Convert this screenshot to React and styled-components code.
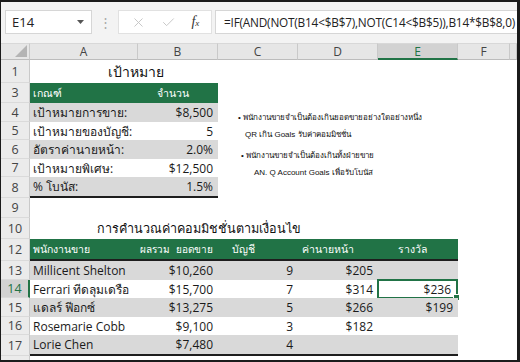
import React from 'react'
import styled, { createGlobalStyle } from 'styled-components'
import { X, Check } from 'lucide-react'

const GREEN = '#217346'
const STRIPE = '#d9d9d9'
const FONT = '"Segoe UI", "Open Sans", "Noto Sans", sans-serif'

const Global = createGlobalStyle`
  html, body { margin: 0; padding: 0; background: #fff; }
  body { font-family: ${FONT}; }
`

const Frame = styled.div`
  width: 520px;
  height: 362px;
  box-sizing: border-box;
  border-style: solid;
  border-color: #1b1b1b;
  border-width: 2px 3px 2px 1px;
  display: flex;
  flex-direction: column;
  overflow: hidden;
  background: #fff;
`

const FormulaBar = styled.div`
  height: 41px;
  flex: none;
  background: #f3f3f3;
  display: flex;
  align-items: flex-start;
  padding: 8px 0 0 4px;
  box-sizing: border-box;
`

const NameBox = styled.div`
  width: 87px;
  height: 24px;
  box-sizing: border-box;
  background: #fff;
  border: 1px solid #d6d6d6;
  display: flex;
  align-items: center;
  justify-content: space-between;
  padding: 0 7px 0 6px;
  font-size: 13px;
  color: #222;
`

const Grip = styled.div`
  width: 26px;
  display: flex;
  justify-content: center;
  color: #a8a8a8;
  font-size: 13px;
  line-height: 24px;
`

const ButtonBox = styled.div`
  width: 94px;
  height: 24px;
  box-sizing: border-box;
  background: #fff;
  border: 1px solid #e1e1e1;
  display: flex;
  align-items: center;
  justify-content: space-around;
  padding: 0 4px;
  color: #c4c4c4;
`

const Fx = styled.span`
  font-family: "Liberation Serif", serif;
  font-style: italic;
  font-size: 14px;
  color: #333;
  sub {
    font-size: 9px;
    vertical-align: baseline;
  }
`

const FormulaInput = styled.div`
  flex: 1;
  margin-left: 3px;
  height: 24px;
  box-sizing: border-box;
  background: #fff;
  border: 1px solid #d6d6d6;
  border-right: none;
  padding-left: 8px;
  display: flex;
  align-items: center;
  font-size: 11.8px;
  letter-spacing: -0.2px;
  color: #222;
  white-space: nowrap;
  overflow: hidden;
`

const Sheet = styled.div`
  flex: 1;
  display: grid;
  grid-template-columns: 29px 108px 80px 80px 80px 80px 52px 1fr;
  grid-template-rows: 17px 23px 20px 19px 18px 19px 18px 21px 20px 21px 22px 19px 18px 19px 18px 21px 1fr;
  min-height: 0;
`

const Corner = styled.div`
  background: #e6e6e6;
  border-right: 1px solid #c9c9c9;
  border-bottom: 1px solid #bcbcbc;
  border-top: 1px solid #d8d8d8;
  display: flex;
  align-items: flex-end;
  justify-content: flex-end;
  padding: 0 2px 2px 0;
`

const ColHead = styled.div`
  background: ${p => (p.$active ? '#d2d2d2' : '#e6e6e6')};
  color: ${p => (p.$active ? GREEN : '#444')};
  border-top: 1px solid #d8d8d8;
  border-right: 1px solid #c9c9c9;
  border-bottom: ${p => (p.$active ? `2px solid ${GREEN}` : '1px solid #bcbcbc')};
  font-size: 12px;
  display: flex;
  align-items: center;
  justify-content: center;
`

const RowHead = styled.div`
  background: ${p => (p.$active ? '#d2d2d2' : '#ebebeb')};
  color: ${p => (p.$active ? GREEN : '#444')};
  border-right: ${p => (p.$active ? `2px solid ${GREEN}` : '1px solid #c9c9c9')};
  border-bottom: 1px solid #dadada;
  font-size: 12.5px;
  display: flex;
  align-items: center;
  justify-content: center;
`

const tones = {
  green: GREEN,
  gray: STRIPE,
  white: '#fff',
}

const Cell = styled.div`
  position: relative;
  background: ${p => tones[p.$tone] || 'transparent'};
  color: ${p => (p.$tone === 'green' ? '#fff' : '#1a1a1a')};
  border-bottom: ${p => (p.$rule ? '2px solid #1e1e1e' : 'none')};
  font-size: ${p => (p.$tone === 'green' ? '10.5px' : '12px')};
  display: flex;
  align-items: center;
  justify-content: ${p => (p.$right ? 'flex-end' : 'flex-start')};
  padding: 0 ${p => (p.$right ? '5px' : '3px')} 0 ${p => p.$indent || 3}px;
  white-space: nowrap;
  min-width: 0;
  box-sizing: border-box;
  ${p =>
    p.$selected &&
    `
    border: 2px solid ${GREEN};
    margin: -1px 0 -1px -1px;
  `}
`

const Handle = styled.span`
  position: absolute;
  right: -4px;
  bottom: -4px;
  width: 5px;
  height: 5px;
  background: ${GREEN};
  border: 1px solid #fff;
`

const HeadSplit = styled.div`
  display: flex;
  justify-content: flex-end;
  gap: 6px;
  width: 100%;
  font-size: 10px;
`

const Title = styled.div`
  grid-column: span ${p => p.$span};
  padding-left: ${p => p.$indent}px;
  font-size: ${p => p.$size}px;
  color: #111;
  display: flex;
  align-items: center;
  white-space: nowrap;
`

const Notes = styled.div`
  grid-column: 4 / 8;
  grid-row: 4 / 9;
  display: flex;
  flex-direction: column;
  gap: 8px;
  padding: 8px 0 0 20px;
  font-family: "Liberation Sans", Arial, sans-serif;
  font-size: 8px;
  color: #111;
`

const Note = styled.div`
  display: flex;
  flex-direction: column;
  gap: 4px;
  padding-left: ${p => p.$shift}px;
  div + div {
    padding-left: ${p => p.$indent}px;
  }
`

const Blank = styled.div``

const blanks = n => Array.from({ length: n }, (_, i) => <Blank key={'b' + i} />)

const goals = [
  ['เป้าหมายการขาย:', '$8,500'],
  ['เป้าหมายของบัญชี:', '5'],
  ['อัตราค่านายหน้า:', '2.0%'],
  ['เป้าหมายพิเศษ:', '$12,500'],
  ['% โบนัส:', '1.5%'],
]

const people = [
  ['Millicent Shelton', '$10,260', '9', '$205', ''],
  ['Ferrari ทีดลุมเดรือ', '$15,700', '7', '$314', '$236'],
  ['แดลร์ ฟีอกซ์', '$13,275', '5', '$266', '$199'],
  ['Rosemarie Cobb', '$9,100', '3', '$182', ''],
  ['Lorie Chen', '$7,480', '4', '', ''],
]

const Triangle = () => (
  <svg width="12" height="12" viewBox="0 0 12 12">
    <polygon points="12,0 12,12 0,12" fill="#b4b4b4" />
  </svg>
)

const DropArrow = () => (
  <svg width="7" height="4" viewBox="0 0 7 4">
    <polygon points="0,0 7,0 3.5,4" fill="#555" />
  </svg>
)

export default function App() {
  return (
    <Frame>
      <Global />
      <FormulaBar>
        <NameBox>
          <span>E14</span>
          <DropArrow />
        </NameBox>
        <Grip>⋮</Grip>
        <ButtonBox>
          <X size={15} strokeWidth={1.5} />
          <Check size={15} strokeWidth={1.5} />
          <Fx>f<sub>x</sub></Fx>
        </ButtonBox>
        <FormulaInput>=IF(AND(NOT(B14&lt;$B$7),NOT(C14&lt;$B$5)),B14*$B$8,0)</FormulaInput>
      </FormulaBar>

      <Sheet>
        <Notes>
          <Note $shift={0} $indent={7}>
            <div>• พนักงานขายจำเป็นต้องเกินยอดขายอย่างใดอย่างหนึ่ง</div>
            <div>QR เกิน Goals รับค่าคอมมิชชั่น</div>
          </Note>
          <Note $shift={3} $indent={13}>
            <div>• พนักงานขายจำเป็นต้องเกินทั้งฝ่ายขาย</div>
            <div>AN. Q Account Goals เพื่อรับโบนัส</div>
          </Note>
        </Notes>

        <Corner><Triangle /></Corner>
        {['A', 'B', 'C', 'D', 'E', 'F'].map(c => (
          <ColHead key={c} $active={c === 'E'}>{c}</ColHead>
        ))}
        <ColHead />

        <RowHead>1</RowHead>
        <Title $span={2} $indent={78} $size={14}>เป้าหมาย</Title>
        {blanks(5)}

        <RowHead>3</RowHead>
        <Cell $tone="green">เกณฑ์</Cell>
        <Cell $tone="green" $indent={19}>จำนวน</Cell>
        {blanks(5)}

        {goals.map(([label, value], i) => (
          <React.Fragment key={label}>
            <RowHead>{i + 4}</RowHead>
            <Cell $tone={i % 2 ? 'white' : 'gray'} $rule={i === goals.length - 1}>{label}</Cell>
            <Cell $tone={i % 2 ? 'white' : 'gray'} $rule={i === goals.length - 1} $right>{value}</Cell>
            <Blank />
          </React.Fragment>
        ))}

        <RowHead>9</RowHead>
        {blanks(7)}

        <RowHead>10</RowHead>
        <Title $span={5} $indent={67} $size={12.6}>การคำนวณค่าคอมมิชชั่นตามเงื่อนไข</Title>
        {blanks(2)}

        <RowHead>12</RowHead>
        <Cell $tone="green" $rule>พนักงานขาย</Cell>
        <Cell $tone="green" $rule $right>
          <HeadSplit><span>ผลรวม</span><span>ยอดขาย</span></HeadSplit>
        </Cell>
        <Cell $tone="green" $rule $indent={14}>บัญชี</Cell>
        <Cell $tone="green" $rule $indent={4}>ค่านายหน้า</Cell>
        <Cell $tone="green" $rule $indent={20}>รางวัล</Cell>
        {blanks(2)}

        {people.map((row, i) => {
          const tone = i % 2 ? 'white' : 'gray'
          const last = i === people.length - 1
          return (
            <React.Fragment key={row[0]}>
              <RowHead $active={i === 1}>{i + 13}</RowHead>
              <Cell $tone={tone} $rule={last}>{row[0]}</Cell>
              <Cell $tone={tone} $rule={last} $right>{row[1]}</Cell>
              <Cell $tone={tone} $rule={last} $right>{row[2]}</Cell>
              <Cell $tone={tone} $rule={last} $right>{row[3]}</Cell>
              <Cell $tone={tone} $rule={last} $right $selected={i === 1}>
                {row[4]}
                {i === 1 && <Handle />}
              </Cell>
              {blanks(2)}
            </React.Fragment>
          )
        })}

        <RowHead>18</RowHead>
        {blanks(7)}
      </Sheet>
    </Frame>
  )
}
